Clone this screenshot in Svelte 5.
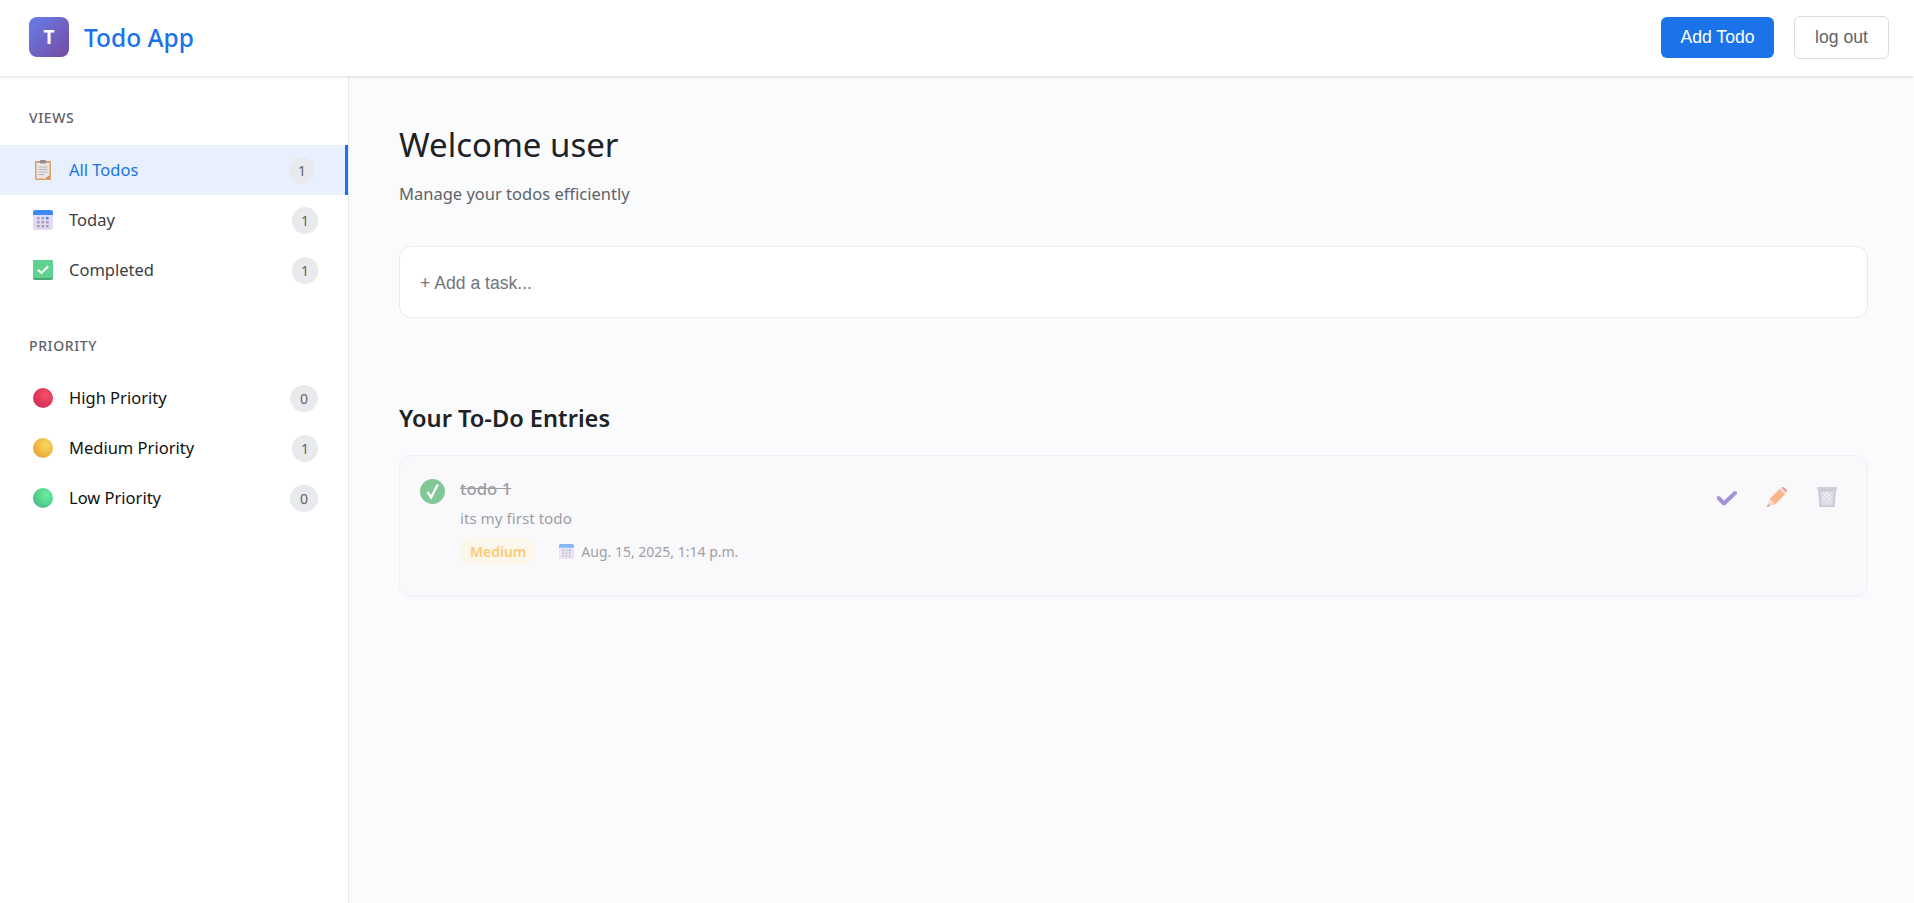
<script>
  const views = [
    { label: "All Todos", count: 1, icon: "clipboard", active: true },
    { label: "Today", count: 1, icon: "calendar" },
    { label: "Completed", count: 1, icon: "done" },
  ];

  const priorities = [
    { label: "High Priority", count: 0, color: "high" },
    { label: "Medium Priority", count: 1, color: "medium" },
    { label: "Low Priority", count: 0, color: "low" },
  ];
</script>

{#snippet calendar(size)}
  <svg width={size} height={size} viewBox="0 0 20 20" aria-hidden="true">
    <rect x="0" y="0" width="20" height="20" rx="2.5" fill="#e2d9f3" />
    <path d="M0 5V2.5A2.5 2.5 0 0 1 2.5 0h15A2.5 2.5 0 0 1 20 2.5V5z" fill="#3a8bf7" />
    {#each [4, 8, 12] as y}
      {#each [4, 8.5, 13] as x}
        <rect {x} y={y + 3} width="2.6" height="2.4" fill={x === 13 && y === 4 ? "#3a8bf7" : "#a5a0b6"} />
      {/each}
    {/each}
  </svg>
{/snippet}

{#snippet clipboard()}
  <svg width="20" height="20" viewBox="0 0 20 20" aria-hidden="true">
    <rect x="2" y="1" width="16" height="19" rx="1" fill="#dc9f6c" />
    <path d="M3.500 3h13v13l-4 2.500H3.500z" fill="#eae6e4" />
    <path d="M12.500 18.500L16.500 15V18.500z" fill="#cf8d58" />
    <rect x="7" y="0" width="6" height="3.500" rx="1" fill="#8f8b94" />
    <path d="M5.500 7h9M5.500 9.500h9M5.500 12h9M5.500 14.500h6" stroke="#b4b1b6" stroke-width="0.9" />
  </svg>
{/snippet}

{#snippet done()}
  <svg width="20" height="20" viewBox="0 0 20 20" aria-hidden="true">
    <rect x="0" y="0" width="20" height="20" rx="2" fill="#46a873" />
    <rect x="0" y="0" width="20" height="18" rx="2" fill="#5fd28f" />
    <path d="M4.800 9.600l3.600 3.400 6.800-6.600" fill="none" stroke="#f2f7f3" stroke-width="2.200" />
  </svg>
{/snippet}

<header class="topbar">
  <div class="brand">
    <div class="logo">T</div>
    <span class="brand-name">Todo App</span>
  </div>
  <div class="top-actions">
    <button class="add-btn">Add Todo</button>
    <button class="logout-btn">log out</button>
  </div>
</header>

<div class="layout">
  <aside class="sidebar">
    <section class="nav-section">
      <h3 class="nav-title">Views</h3>
      {#each views as view}
        <div class="nav-item" class:active={view.active}>
          <span class="nav-icon">
            {#if view.icon === "clipboard"}
              {@render clipboard()}
            {:else if view.icon === "calendar"}
              {@render calendar(20)}
            {:else}
              {@render done()}
            {/if}
          </span>
          <span class="nav-label">{view.label}</span>
          <span class="nav-count">{view.count}</span>
        </div>
      {/each}
    </section>

    <section class="nav-section">
      <h3 class="nav-title">Priority</h3>
      {#each priorities as item}
        <div class="nav-item priority-item">
          <span class="nav-icon"><span class="dot {item.color}"></span></span>
          <span class="nav-label">{item.label}</span>
          <span class="nav-count" class:zero={item.count === 0}>{item.count}</span>
        </div>
      {/each}
    </section>
  </aside>

  <main class="content">
    <h1>Welcome user</h1>
    <p class="subtitle">Manage your todos efficiently</p>

    <div class="quick-add">+ Add a task...</div>

    <h2>Your To-Do Entries</h2>

    <article class="todo">
      <div class="todo-left">
        <svg class="todo-check" width="25" height="25" viewBox="0 0 25 25" aria-hidden="true">
          <circle cx="12.500" cy="12.500" r="12.500" fill="#34a853" />
          <path d="M7.500 13l3.600 5.400L17.800 5.500" fill="none" stroke="#fff" stroke-width="2.400" />
        </svg>
        <div class="todo-body">
          <div class="todo-title">todo 1</div>
          <div class="todo-desc">its my first todo</div>
          <div class="todo-meta">
            <span class="pill">Medium</span>
            <span class="date">{@render calendar(15)}Aug. 15, 2025, 1:14 p.m.</span>
          </div>
        </div>
      </div>
      <div class="todo-actions">
        <button class="icon-btn" aria-label="Complete">
          <svg width="20" height="20" viewBox="0 0 20 20">
            <path d="M1.500 11L7 16.500l11-10.500" fill="none" stroke="#6d4fc4" stroke-width="4" stroke-linecap="round" stroke-linejoin="round" />
          </svg>
        </button>
        <button class="icon-btn" aria-label="Edit">
          <svg width="20" height="20" viewBox="0 0 20 20">
            <path d="M2.500 12L13 1.500 18.500 7 8 17.500z" fill="#fb8a3c" />
            <path d="M15 0.500a1.600 1.600 0 0 1 2.200 0l2.300 2.300a1.600 1.600 0 0 1 0 2.200L18.500 7 13 1.500z" fill="#f8554b" />
            <path d="M12.500 2l1.600-1.600 5.500 5.500-1.600 1.600z" fill="#dcdce4" />
            <path d="M2.500 12L0 20l8-2.500z" fill="#f3c9a6" />
            <path d="M1 17L0 20l3-1z" fill="#8a5a6a" />
          </svg>
        </button>
        <button class="icon-btn" aria-label="Delete">
          <svg width="20" height="20" viewBox="0 0 20 20">
            <path d="M1 2h18L17.500 20h-15z" fill="#a9a6b8" />
            <path d="M3 4h14l-1.200 14.500H4.200z" fill="#c9c7d6" />
            <rect x="0" y="0" width="20" height="2.500" fill="#b5b3c4" />
            <path d="M6 6l8 8M9 5l6 6M5.500 10l5 6M14 6l-8 8M11 5l-5.500 5.500M14.500 10l-5 6" stroke="#eeedf3" stroke-width="0.8" />
          </svg>
        </button>
      </div>
    </article>
  </main>
</div>

<style>
  :global(body) {
    margin: 0;
    background: #fafbfd;
    font-family: "Noto Sans", "Open Sans", sans-serif;
    color: #202124;
  }

  .topbar {
    height: 76px;
    box-sizing: border-box;
    padding: 0 25px 2px 29px;
    display: flex;
    align-items: center;
    justify-content: space-between;
    background: #fff;
    box-shadow: 0 1px 3px rgba(0, 0, 0, 0.12);
    position: relative;
  }

  .brand {
    display: flex;
    align-items: center;
    gap: 15px;
  }

  .logo {
    width: 40px;
    height: 40px;
    border-radius: 8px;
    background: linear-gradient(135deg, #667eea, #764ba2);
    color: #fff;
    font-weight: 700;
    font-size: 19px;
    display: flex;
    align-items: center;
    justify-content: center;
  }

  .brand-name {
    font-size: 24.5px;
    font-weight: 500;
    color: #1a73e8;
  }

  .top-actions {
    display: flex;
    align-items: center;
    gap: 20px;
  }

  button {
    font-family: "Liberation Sans", Arial, sans-serif;
    font-size: 17.6px;
    cursor: pointer;
  }

  .add-btn {
    width: 113px;
    height: 41px;
    padding: 0;
    border: none;
    border-radius: 6px;
    background: #1a73e8;
    color: #fff;
  }

  .logout-btn {
    width: 95px;
    height: 43px;
    padding: 0;
    border: 1px solid #dadce0;
    border-radius: 6px;
    background: #fff;
    color: #5f6368;
  }

  .layout {
    display: flex;
    height: 827px;
  }

  .sidebar {
    width: 348px;
    flex-shrink: 0;
    background: #fff;
    border-right: 1px solid #e8eaed;
    padding-top: 32px;
  }

  .nav-section {
    margin-bottom: 41px;
  }

  .nav-title {
    margin: 0 0 17px;
    padding-left: 29px;
    font-size: 14px;
    line-height: 20px;
    font-weight: 500;
    letter-spacing: 0.6px;
    text-transform: uppercase;
    color: #5f6368;
  }

  .nav-item {
    height: 50px;
    box-sizing: border-box;
    padding: 0 30px 0 33px;
    display: flex;
    align-items: center;
    font-size: 16.5px;
    color: #3c4043;
  }

  .nav-item.active {
    background: #e8f0fe;
    border-right: 3px solid #1a73e8;
    color: #1a73e8;
  }

  .priority-item {
    color: #111;
  }

  .nav-icon {
    width: 20px;
    height: 20px;
    margin-right: 16px;
    display: flex;
  }

  .nav-label {
    flex: 1;
    padding-bottom: 2px;
  }

  .nav-count {
    min-width: 10px;
    padding: 3px 8px;
    border-radius: 14px;
    background: #e8eaed;
    color: #5f6368;
    font-size: 14px;
    line-height: 21px;
    text-align: center;
  }

  .nav-count.zero {
    padding: 3px 9px;
  }

  .dot {
    width: 20px;
    height: 20px;
    border-radius: 50%;
  }

  .dot.high {
    background: radial-gradient(circle at 65% 35%, #f4506a, #e0345a 55%, #b93a60);
  }

  .dot.medium {
    background: radial-gradient(circle at 65% 35%, #f8d860, #eeb13c 60%, #d89a58);
  }

  .dot.low {
    background: radial-gradient(circle at 65% 35%, #6cec9f, #50d08c 55%, #4a9f90);
  }

  .content {
    flex: 1;
    padding: 44px 46px 0 50px;
  }

  h1 {
    margin: 0;
    font-size: 33px;
    line-height: 50px;
    font-weight: 400;
    color: #202124;
  }

  .subtitle {
    margin: 12px 0 0;
    font-size: 16.5px;
    line-height: 24px;
    color: #5f6368;
  }

  .quick-add {
    margin-top: 40px;
    height: 67px;
    padding: 3px 20px 0;
    display: flex;
    align-items: center;
    background: #fff;
    border: 1px solid #e8eaed;
    border-radius: 12px;
    font-family: "Liberation Sans", Arial, sans-serif;
    font-size: 17.6px;
    color: #70757a;
  }

  h2 {
    margin: 82px 0 0;
    font-size: 23.6px;
    line-height: 36px;
    font-weight: 600;
    color: #202124;
  }

  .todo {
    margin-top: 19px;
    height: 142px;
    box-sizing: border-box;
    padding: 21px 20px 0;
    display: flex;
    justify-content: space-between;
    align-items: flex-start;
    background: #f9f9fc;
    border: 1px solid #f0f1f4;
    border-radius: 12px;
  }

  .todo-left {
    display: flex;
    gap: 15px;
    opacity: 0.6;
  }

  .todo-check {
    flex-shrink: 0;
    margin-top: 2px;
  }

  .todo-title {
    font-size: 16.8px;
    line-height: 24px;
    font-weight: 500;
    text-decoration: line-through;
    color: #5f6368;
  }

  .todo-desc {
    margin-top: 7px;
    font-size: 15.2px;
    line-height: 20px;
    color: #5f6368;
  }

  .todo-meta {
    margin-top: 10px;
    display: flex;
    align-items: center;
    gap: 23px;
    font-size: 14px;
  }

  .pill {
    padding: 3px 10px;
    border-radius: 14px;
    background: #fef7e0;
    color: #fbad15;
    font-weight: 600;
    line-height: 21px;
  }

  .date {
    display: flex;
    align-items: center;
    gap: 7px;
    color: #5f6368;
  }

  .todo-actions {
    display: flex;
    gap: 10px;
    opacity: 0.6;
  }

  .icon-btn {
    width: 40px;
    height: 40px;
    padding: 0;
    border: none;
    background: none;
    display: flex;
    align-items: center;
    justify-content: center;
  }
</style>
